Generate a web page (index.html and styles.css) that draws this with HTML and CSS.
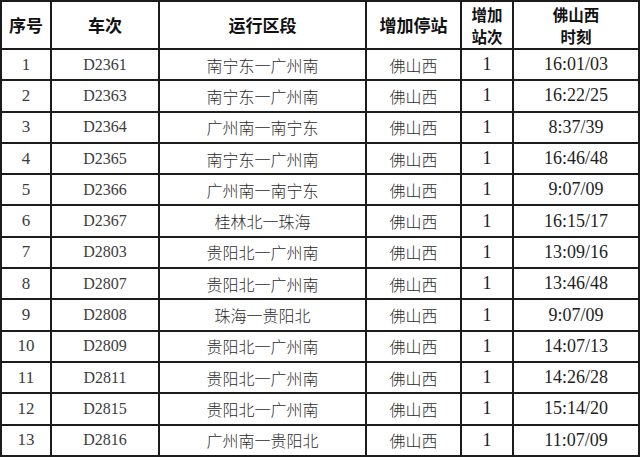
FILE: index.html
```html
<!DOCTYPE html>
<html lang="zh-CN">
<head>
<meta charset="utf-8">
<title>佛山西增加停站</title>
<link rel="stylesheet" href="styles.css">
</head>
<body>
<table class="sched">
  <colgroup>
    <col class="c-no"><col class="c-train"><col class="c-route"><col class="c-stop"><col class="c-cnt"><col class="c-time">
  </colgroup>
  <thead>
    <tr>
      <th>序号</th>
      <th>车次</th>
      <th>运行区段</th>
      <th>增加停站</th>
      <th class="two">增加<br>站次</th>
      <th class="two">佛山西<br>时刻</th>
    </tr>
  </thead>
  <tbody>
    <tr><td class="num">1</td><td class="train">D2361</td><td class="cjk">南宁东一广州南</td><td class="cjk">佛山西</td><td class="t">1</td><td class="t">16:01/03</td></tr>
    <tr><td class="num">2</td><td class="train">D2363</td><td class="cjk">南宁东一广州南</td><td class="cjk">佛山西</td><td class="t">1</td><td class="t">16:22/25</td></tr>
    <tr><td class="num">3</td><td class="train">D2364</td><td class="cjk">广州南一南宁东</td><td class="cjk">佛山西</td><td class="t">1</td><td class="t">8:37/39</td></tr>
    <tr><td class="num">4</td><td class="train">D2365</td><td class="cjk">南宁东一广州南</td><td class="cjk">佛山西</td><td class="t">1</td><td class="t">16:46/48</td></tr>
    <tr><td class="num">5</td><td class="train">D2366</td><td class="cjk">广州南一南宁东</td><td class="cjk">佛山西</td><td class="t">1</td><td class="t">9:07/09</td></tr>
    <tr><td class="num">6</td><td class="train">D2367</td><td class="cjk">桂林北一珠海</td><td class="cjk">佛山西</td><td class="t">1</td><td class="t">16:15/17</td></tr>
    <tr><td class="num">7</td><td class="train">D2803</td><td class="cjk">贵阳北一广州南</td><td class="cjk">佛山西</td><td class="t">1</td><td class="t">13:09/16</td></tr>
    <tr><td class="num">8</td><td class="train">D2807</td><td class="cjk">贵阳北一广州南</td><td class="cjk">佛山西</td><td class="t">1</td><td class="t">13:46/48</td></tr>
    <tr><td class="num">9</td><td class="train">D2808</td><td class="cjk">珠海一贵阳北</td><td class="cjk">佛山西</td><td class="t">1</td><td class="t">9:07/09</td></tr>
    <tr><td class="num">10</td><td class="train">D2809</td><td class="cjk">贵阳北一广州南</td><td class="cjk">佛山西</td><td class="t">1</td><td class="t">14:07/13</td></tr>
    <tr><td class="num">11</td><td class="train">D2811</td><td class="cjk">贵阳北一广州南</td><td class="cjk">佛山西</td><td class="t">1</td><td class="t">14:26/28</td></tr>
    <tr><td class="num">12</td><td class="train">D2815</td><td class="cjk">贵阳北一广州南</td><td class="cjk">佛山西</td><td class="t">1</td><td class="t">15:14/20</td></tr>
    <tr><td class="num">13</td><td class="train">D2816</td><td class="cjk">广州南一贵阳北</td><td class="cjk">佛山西</td><td class="t">1</td><td class="t">11:07/09</td></tr>
  </tbody>
</table>
</body>
</html>
```
FILE: styles.css
```css
html, body {
  margin: 0;
  padding: 0;
  background: #ffffff;
}
body {
  overflow: hidden;
}
.sched {
  border-collapse: collapse;
  table-layout: fixed;
  width: 638px;
  margin: 0;
  color: #333333;
}
.c-no { width: 50px; }
.c-train { width: 108px; }
.c-route { width: 207px; }
.c-stop { width: 95px; }
.c-cnt { width: 52px; }
.c-time { width: 126px; }

.sched th,
.sched td {
  border: 2px solid #1c1c1c;
  padding: 0;
  text-align: center;
  vertical-align: middle;
}
.sched thead tr {
  height: 48px;
}
.sched th {
  font-family: "Noto Sans CJK SC", sans-serif;
  font-weight: 700;
  font-size: 17px;
  line-height: 24px;
  color: #111111;
}
.sched th.two {
  font-size: 15.5px;
  line-height: 22.5px;
}
.sched tbody tr {
  height: 31.3px;
}
.sched td.num {
  font-family: "Liberation Serif", serif;
  font-size: 17px;
  color: #3c3c3c;
}
.sched td.train {
  font-family: "Liberation Serif", serif;
  font-size: 16px;
  color: #3c3c3c;
}
.sched td.cjk {
  font-family: "Noto Sans CJK SC", sans-serif;
  font-weight: 300;
  font-size: 16px;
  color: #2c2c2c;
}
.sched td.t {
  font-family: "Liberation Serif", serif;
  font-size: 18px;
  color: #1e1e1e;
}
```
